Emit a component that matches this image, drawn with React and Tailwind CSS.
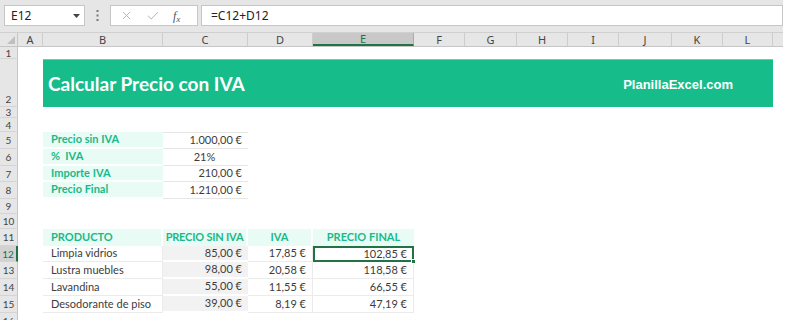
import React from 'react';
import { X, Check } from 'lucide-react';

const colW = ['w-[25px]', 'w-[120px]', 'w-[85px]', 'w-[65px]', 'w-[101px]', 'w-[51px]', 'w-[52px]', 'w-[51px]', 'w-[51px]', 'w-[53px]', 'w-[51px]', 'w-[50px]'];
const letters = ['A', 'B', 'C', 'D', 'E', 'F', 'G', 'H', 'I', 'J', 'K', 'L'];

const rowH = {
    1: 'h-[12px]', 2: 'h-[48px]', 3: 'h-[11px]', 4: 'h-[14px]', 5: 'h-[17px]', 6: 'h-[17px]', 7: 'h-[16px]', 8: 'h-[17px]',
    9: 'h-[15px]', 10: 'h-[15px]', 11: 'h-[17px]', 12: 'h-[16px]', 13: 'h-[17px]', 14: 'h-[17px]', 15: 'h-[17px]', 16: 'h-[17px]',
};

const resumen = [
    { label: 'Precio sin IVA', value: '1.000,00 €' },
    { label: '%  IVA', value: '21%', center: true },
    { label: 'Importe IVA', value: '210,00 €' },
    { label: 'Precio Final', value: '1.210,00 €' },
];

const productos = [
    ['Limpia vidrios', '85,00 €', '17,85 €', '102,85 €'],
    ['Lustra muebles', '98,00 €', '20,58 €', '118,58 €'],
    ['Lavandina', '55,00 €', '11,55 €', '66,55 €'],
    ['Desodorante de piso', '39,00 €', '8,19 €', '47,19 €'],
];

const cellFont = { fontFamily: 'Lato, "Open Sans", sans-serif' };

function RowHead({ n }) {
    const active = n === 12;
    return (
        <div className={`w-[18px] shrink-0 flex justify-center text-[10px] leading-none border-b border-[#d4d4d4] ${n === 2 ? 'items-end pb-[2px]' : 'items-center'} ${active ? 'bg-[#d2d2d2] text-[#217346] border-r-2 border-r-[#217346]' : 'bg-[#e6e6e6] text-[#444] border-r border-r-[#c6c6c6]'}`}>
            {n}
        </div>
    );
}

function Row({ n, children }) {
    return (
        <div className={`flex ${rowH[n]}`}>
            <RowHead n={n} />
            {children}
        </div>
    );
}

export default function App() {
    return (
        <div className="w-[800px] h-[320px] overflow-hidden bg-white" style={{ fontFamily: '"Noto Sans", "Open Sans", sans-serif' }}>
            <div className="w-[783px]">
                {/* Formula bar */}
                <div className="h-[33px] bg-[#e6e6e6] flex items-start pt-[5px] pl-[4px] border-b border-[#d0d0d0]">
                    <div className="w-[81px] h-[21px] bg-white border border-[#c6c6c6] flex items-center justify-between pl-[6px] pr-[4px] text-[12px] text-[#222]">
                        <span>E12</span>
                        <svg width="7" height="4" viewBox="0 0 7 4"><path d="M0 0h7L3.5 4z" fill="#444" /></svg>
                    </div>
                    <div className="w-[25px] h-[21px] flex items-center justify-center">
                        <svg width="3" height="11" viewBox="0 0 3 11">
                            <rect x="0.5" y="0" width="2" height="2" fill="#777" />
                            <rect x="0.5" y="4.5" width="2" height="2" fill="#777" />
                            <rect x="0.5" y="9" width="2" height="2" fill="#777" />
                        </svg>
                    </div>
                    <div className="w-[88px] h-[21px] bg-white border border-[#c6c6c6] flex items-center pl-[9px] gap-[13px]">
                        <X className="w-[13px] h-[13px] text-[#a6a6a6]" strokeWidth={1.5} />
                        <Check className="w-[14px] h-[14px] text-[#a6a6a6]" strokeWidth={1.5} />
                        <span className="italic text-[12px] text-[#555] leading-none" style={{ fontFamily: '"Liberation Serif", serif' }}>f<span className="text-[9px] relative top-[2px]">x</span></span>
                    </div>
                    <div className="ml-[3px] flex-1 h-[21px] bg-white border border-[#c6c6c6] flex items-center pl-[9px] text-[12px] text-[#222]">
                        =C12+D12
                    </div>
                </div>

                {/* Column headers */}
                <div className="flex h-[14px] bg-[#e6e6e6] border-b border-[#c6c6c6]">
                    <div className="w-[18px] shrink-0 border-r border-[#c6c6c6] flex items-end justify-end pr-[2px] pb-[2px]">
                        <svg width="8" height="8" viewBox="0 0 8 8"><path d="M8 0v8H0z" fill="#c0c0c0" /></svg>
                    </div>
                    {letters.map((l, i) => (
                        <div key={l} className={`${colW[i]} shrink-0 flex items-center justify-center text-[11px] leading-none ${l === 'E' ? 'bg-[#c8c8c8] text-[#217346] border-b-2 border-[#217346] border-r border-r-[#ababab]' : 'text-[#444] border-r border-[#cdcdcd]'}`}>
                            {l}
                        </div>
                    ))}
                    <div className="flex-1" />
                </div>

                <div className="text-[11px] text-[#3c3c3c] whitespace-nowrap" style={cellFont}>
                    <Row n={1} />
                    <Row n={2}>
                        <div className="w-[25px] shrink-0" />
                        <div className="w-[730px] shrink-0 bg-[#16bd8a] border-t border-[#5fd3ae] flex items-center justify-between pl-[5px] pr-[40px]">
                            <span className="text-white font-bold text-[19px] pt-[2px]">Calcular Precio con IVA</span>
                            <span className="text-white font-bold text-[13px] pt-[2px]" style={{ fontFamily: '"Liberation Sans", Arial, sans-serif' }}>PlanillaExcel.com</span>
                        </div>
                    </Row>
                    <Row n={3} />
                    <Row n={4} />
                    {resumen.map((r, i) => (
                        <Row key={r.label} n={5 + i}>
                            <div className="w-[25px] shrink-0" />
                            <div className="w-[120px] shrink-0 bg-[#e9fbf5] border-b-2 border-white flex items-center pl-[8px] font-bold text-[#19b98a] whitespace-pre">
                                {r.label}
                            </div>
                            <div className={`w-[85px] shrink-0 border-b border-[#e6e6e6] flex items-center ${i === 0 ? 'border-t' : ''} ${r.center ? 'justify-center pr-[2px]' : 'justify-end pr-[6px]'}`}>
                                {r.value}
                            </div>
                        </Row>
                    ))}
                    <Row n={9} />
                    <Row n={10} />
                    <Row n={11}>
                        <div className="w-[25px] shrink-0" />
                        <div className="w-[120px] shrink-0 bg-[#e9fbf5] border-r-2 border-white flex items-center pl-[8px] font-bold text-[#19b98a]">PRODUCTO</div>
                        <div className="w-[85px] shrink-0 bg-[#e9fbf5] border-r-2 border-white flex items-center justify-center font-bold text-[#19b98a] tracking-[-0.2px]">PRECIO SIN IVA</div>
                        <div className="w-[65px] shrink-0 bg-[#e9fbf5] border-r-2 border-white flex items-center justify-center font-bold text-[#19b98a]">IVA</div>
                        <div className="w-[101px] shrink-0 bg-[#e9fbf5] flex items-center justify-center font-bold text-[#19b98a]">PRECIO FINAL</div>
                    </Row>
                    {productos.map((p, i) => (
                        <Row key={p[0]} n={12 + i}>
                            <div className="w-[25px] shrink-0" />
                            <div className="w-[120px] shrink-0 border-b border-r border-[#ebebeb] flex items-center pl-[8px]">{p[0]}</div>
                            <div className="w-[85px] shrink-0 bg-[#f2f2f2] border-b-2 border-white flex items-center justify-end pr-[6px]">{p[1]}</div>
                            <div className="w-[65px] shrink-0 border-b border-r border-[#ebebeb] flex items-center justify-end pr-[6px]">{p[2]}</div>
                            {i === 0 ? (
                                <div className="w-[101px] shrink-0 relative border-2 border-[#217346] flex items-center justify-end pr-[5px]">
                                    {p[3]}
                                    <span className="absolute -right-[4px] -bottom-[4px] w-[5px] h-[5px] bg-[#217346] border border-white" />
                                </div>
                            ) : (
                                <div className="w-[101px] shrink-0 border-b border-r border-[#ebebeb] flex items-center justify-end pr-[6px]">{p[3]}</div>
                            )}
                        </Row>
                    ))}
                    <Row n={16} />
                </div>
            </div>
        </div>
    );
}
